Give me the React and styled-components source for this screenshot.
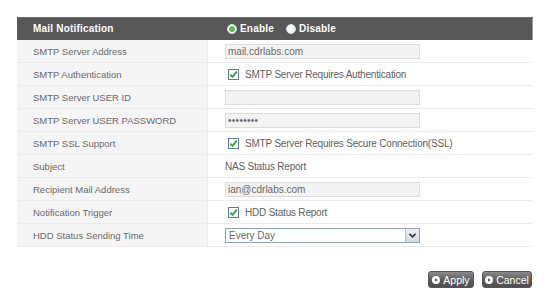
import styled, { createGlobalStyle } from "styled-components";

const GlobalStyle = createGlobalStyle`
  body {
    margin: 0;
    background: #fff;
    font-family: "Liberation Sans", Arial, sans-serif;
  }
`;

const Page = styled.div`
  width: 550px;
  height: 306px;
  padding: 17px 0 0 17px;
  box-sizing: border-box;
`;

const Table = styled.div`
  width: 516px;
  display: flex;
  flex-direction: column;
`;

const HeaderRow = styled.div`
  display: flex;
  height: 23px;
  background: #585858;
  box-shadow: inset 0 1px 0 #6e6e6e, inset -1px 0 0 #9a9a9a;
  color: #fff;
  font-weight: bold;
  font-size: 10px;
  letter-spacing: 0.2px;
`;

const Row = styled.div`
  display: flex;
  height: 23px;
  border-bottom: 1px solid #ebebeb;
  box-sizing: border-box;
`;

const Label = styled.div`
  width: 191px;
  flex: none;
  display: flex;
  align-items: center;
  padding-left: 16px;
  box-sizing: border-box;
  background: ${(p) => (p.$header ? "transparent" : "#f5f5f5")};
  border-right: ${(p) => (p.$header ? "none" : "1px solid #ebebeb")};
  color: ${(p) => (p.$header ? "#fff" : "#6a6a6a")};
  font-size: ${(p) => (p.$header ? "10px" : "9.5px")};
  letter-spacing: ${(p) => (p.$header ? "0.2px" : "0")};
`;

const Value = styled.div`
  flex: 1;
  display: flex;
  align-items: center;
  padding-left: 17px;
  gap: 6px;
  color: ${(p) => (p.$header ? "#fff" : "#5f5f5f")};
  font-size: 10px;
`;

const Radio = styled.span`
  display: inline-flex;
  align-items: center;
  gap: 3px;
  margin-left: ${(p) => (p.$first ? "2px" : "6px")};
`;

const RadioDot = styled.span`
  width: 8px;
  height: 8px;
  border-radius: 50%;
  border: 1px solid #dfe6ee;
  background: ${(p) =>
    p.$on
      ? "radial-gradient(circle, #4dc94a 0 2.6px, #fff 3.2px)"
      : "radial-gradient(circle at 40% 40%, #fff 0 3px, #e8eef4 4px)"};
`;

const TextInput = styled.div`
  width: 195px;
  height: 15px;
  box-sizing: border-box;
  background: #f3f3f3;
  border: 1px solid #dcdcdc;
  color: #6a6a6a;
  font-size: 10px;
  line-height: 13px;
  padding-left: 2px;
  letter-spacing: ${(p) => (p.$dots ? "0.3px" : "0")};
`;

const Select = styled.div`
  width: 195px;
  height: 15px;
  box-sizing: border-box;
  border: 1px solid #8fa5bf;
  background: #fff;
  display: flex;
  color: #6a6a6a;
  font-size: 10px;
  line-height: 13px;
`;

const SelectText = styled.span`
  flex: 1;
  padding-left: 3px;
`;

const SelectArrow = styled.span`
  width: 13px;
  background: linear-gradient(#eef0f4, #d4d9e0);
  border-left: 1px solid #b5c0cd;
  display: flex;
  align-items: center;
  justify-content: center;
`;

const Check = styled.span`
  width: 11px;
  height: 11px;
  box-sizing: border-box;
  border: 1px solid #5b7ea3;
  background: #fff;
  display: inline-flex;
  align-items: center;
  justify-content: center;
  margin-left: 3px;
`;

const CheckText = styled.span`
  color: #5f5f5f;
  font-size: 10px;
  letter-spacing: -0.2px;
`;

const Footer = styled.div`
  width: 516px;
  display: flex;
  justify-content: flex-end;
  gap: 8px;
  margin-top: 24px;
`;

const Button = styled.button`
  width: ${(p) => p.$w}px;
  height: 17px;
  padding: 0;
  border: 1px solid #555;
  border-radius: 3px;
  background: linear-gradient(#8a8a8a, #5c5c5c 55%, #4e4e4e);
  color: #fff;
  font-family: "Liberation Sans", Arial, sans-serif;
  font-size: 10.5px;
  display: flex;
  align-items: center;
  justify-content: center;
  gap: 3px;
  margin-right: ${(p) => (p.$last ? "1px" : "0")};
`;

const CheckMark = () => (
  <svg width="9" height="9" viewBox="0 0 9 9">
    <path d="M1.2 4.6 L3.5 6.9 L7.8 1.6" fill="none" stroke="#2fa82f" strokeWidth="1.8" />
  </svg>
);

const PlayIcon = () => (
  <svg width="8" height="8" viewBox="0 0 8 8">
    <circle cx="4" cy="4" r="4" fill="#fff" />
    <path d="M3 2.2 L5.6 4 L3 5.8 Z" fill="#555" />
  </svg>
);

const ArrowDown = () => (
  <svg width="7" height="5" viewBox="0 0 7 5">
    <path d="M0.5 0.8 L3.5 3.8 L6.5 0.8" fill="none" stroke="#333" strokeWidth="1.6" />
  </svg>
);

const CheckRow = ({ label, text }) => (
  <Row>
    <Label>{label}</Label>
    <Value>
      <Check>
        <CheckMark />
      </Check>
      <CheckText>{text}</CheckText>
    </Value>
  </Row>
);

const InputRow = ({ label, value, dots }) => (
  <Row>
    <Label>{label}</Label>
    <Value>
      <TextInput $dots={dots}>{value}</TextInput>
    </Value>
  </Row>
);

export default function App() {
  return (
    <Page>
      <GlobalStyle />
      <Table>
        <HeaderRow>
          <Label $header>Mail Notification</Label>
          <Value $header>
            <Radio $first>
              <RadioDot $on />
              Enable
            </Radio>
            <Radio>
              <RadioDot />
              Disable
            </Radio>
          </Value>
        </HeaderRow>
        <InputRow label="SMTP Server Address" value="mail.cdrlabs.com" />
        <CheckRow label="SMTP Authentication" text="SMTP Server Requires Authentication" />
        <InputRow label="SMTP Server USER ID" value="" />
        <InputRow label="SMTP Server USER PASSWORD" value="••••••••" dots />
        <CheckRow label="SMTP SSL Support" text="SMTP Server Requires Secure Connection(SSL)" />
        <Row>
          <Label>Subject</Label>
          <Value>
            <CheckText>NAS Status Report</CheckText>
          </Value>
        </Row>
        <InputRow label="Recipient Mail Address" value="ian@cdrlabs.com" />
        <CheckRow label="Notification Trigger" text="HDD Status Report" />
        <Row>
          <Label>HDD Status Sending Time</Label>
          <Value>
            <Select>
              <SelectText>Every Day</SelectText>
              <SelectArrow>
                <ArrowDown />
              </SelectArrow>
            </Select>
          </Value>
        </Row>
      </Table>
      <Footer>
        <Button $w={46}>
          <PlayIcon />
          Apply
        </Button>
        <Button $w={50} $last>
          <PlayIcon />
          Cancel
        </Button>
      </Footer>
    </Page>
  );
}
